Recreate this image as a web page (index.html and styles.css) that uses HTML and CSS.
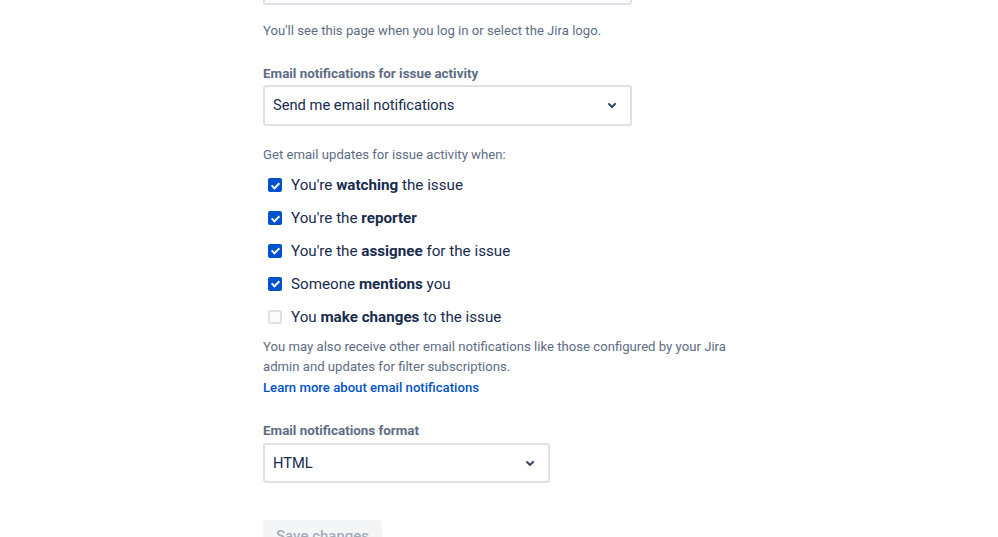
FILE: index.html
```html
<!DOCTYPE html>
<html lang="en">
  <head>
    <meta charset="UTF-8" />
    <meta name="viewport" content="width=device-width, initial-scale=1.0" />
    <title>Email notifications</title>
    <link rel="stylesheet" href="styles.css">
  </head>
  <body>
    <form class="settings">
      <div class="field-box top-box"></div>
      <p class="help">You'll see this page when you log in or select the Jira logo.</p>

      <label class="label first-label">Email notifications for issue activity</label>
      <div class="select wide">
        <span>Send me email notifications</span>
        <svg class="chevron" width="24" height="24" viewBox="0 0 24 24">
          <path d="M8.3 10.3a1 1 0 0 1 1.4 0L12 12.6l2.3-2.3a1 1 0 1 1 1.4 1.4l-3 3a1 1 0 0 1-1.4 0l-3-3a1 1 0 0 1 0-1.4z" fill="#344563"/>
        </svg>
      </div>

      <p class="help when">Get email updates for issue activity when:</p>
      <ul class="checks">
        <li><span class="box on"></span>You're <b>watching</b> the issue</li>
        <li><span class="box on"></span>You're the <b>reporter</b></li>
        <li><span class="box on"></span>You're the <b>assignee</b> for the issue</li>
        <li><span class="box on"></span>Someone <b>mentions</b> you</li>
        <li><span class="box"></span>You <b>make changes</b> to the issue</li>
      </ul>

      <p class="help more">You may also receive other email notifications like those configured by your Jira admin and updates for filter subscriptions.<br><a href="#">Learn more about email notifications</a></p>

      <label class="label format">Email notifications format</label>
      <div class="select narrow">
        <span>HTML</span>
        <svg class="chevron" width="24" height="24" viewBox="0 0 24 24">
          <path d="M8.3 10.3a1 1 0 0 1 1.4 0L12 12.6l2.3-2.3a1 1 0 1 1 1.4 1.4l-3 3a1 1 0 0 1-1.4 0l-3-3a1 1 0 0 1 0-1.4z" fill="#344563"/>
        </svg>
      </div>

      <button type="button" class="save" disabled>Save changes</button>
    </form>
  </body>
</html>
```

FILE: styles.css
```css
body {
  margin: 0;
  background: #fff;
  font-family: Roboto, "Liberation Sans", sans-serif;
  color: #172b4d;
  overflow: hidden;
}
.settings {
  margin-left: 263px;
  margin-top: -35px;
  width: 470px;
  display: flex;
  flex-direction: column;
  align-items: flex-start;
}
.field-box {
  box-sizing: border-box;
  width: 369px;
  height: 40px;
  border: 2px solid #dfe1e6;
  border-radius: 3px;
  background: #fafbfc;
}
.help {
  margin: 16px 0 0;
  font-size: 13.15px;
  line-height: 20.5px;
  color: #5e6c84;
}
.label {
  margin-top: 24px;
  font-size: 13.4px;
  line-height: 16px;
  font-weight: 700;
  color: #5e6c84;
}
.select {
  box-sizing: border-box;
  margin-top: 3px;
  height: 41px;
  border: 2px solid #dfe1e6;
  border-radius: 3px;
  background: #fff;
  display: flex;
  align-items: center;
  justify-content: space-between;
  padding: 0 6px 0 8px;
  font-size: 14.7px;
  color: #172b4d;
}
.wide {
  width: 369px;
}
.narrow {
  width: 287px;
}
.help.when {
  margin-top: 19px;
}
.checks {
  list-style: none;
  margin: 4px 0 0;
  padding: 0;
}
.checks li {
  height: 32.8px;
  display: flex;
  align-items: center;
  font-size: 15.2px;
  color: #172b4d;
  white-space: pre;
}
.checks b {
  font-weight: 700;
}
.box {
  box-sizing: border-box;
  width: 14px;
  height: 14px;
  margin: 0 9px 0 5px;
  border: 2px solid #dfe1e6;
  border-radius: 2px;
  background: #fafbfc;
  position: relative;
}
.box.on {
  border-color: #0052cc;
  background: #0052cc;
}
.box.on::after {
  content: "";
  position: absolute;
  left: 3px;
  top: 0.5px;
  width: 3px;
  height: 6px;
  border: solid #fff;
  border-width: 0 2px 2px 0;
  transform: rotate(45deg);
}
.help.more {
  margin-top: 4px;
}
.help a {
  color: #0052cc;
  font-weight: 500;
  text-decoration: none;
}
.label.format {
  margin-top: 25px;
}
.select.narrow {
  margin-top: 4px;
  height: 40px;
}
.save {
  margin-top: 37px;
  height: 32px;
  padding: 0 13px;
  border: none;
  border-radius: 3px;
  background: #f4f5f7;
  color: #a5adba;
  font-family: inherit;
  font-size: 15px;
  font-weight: 500;
}
```
